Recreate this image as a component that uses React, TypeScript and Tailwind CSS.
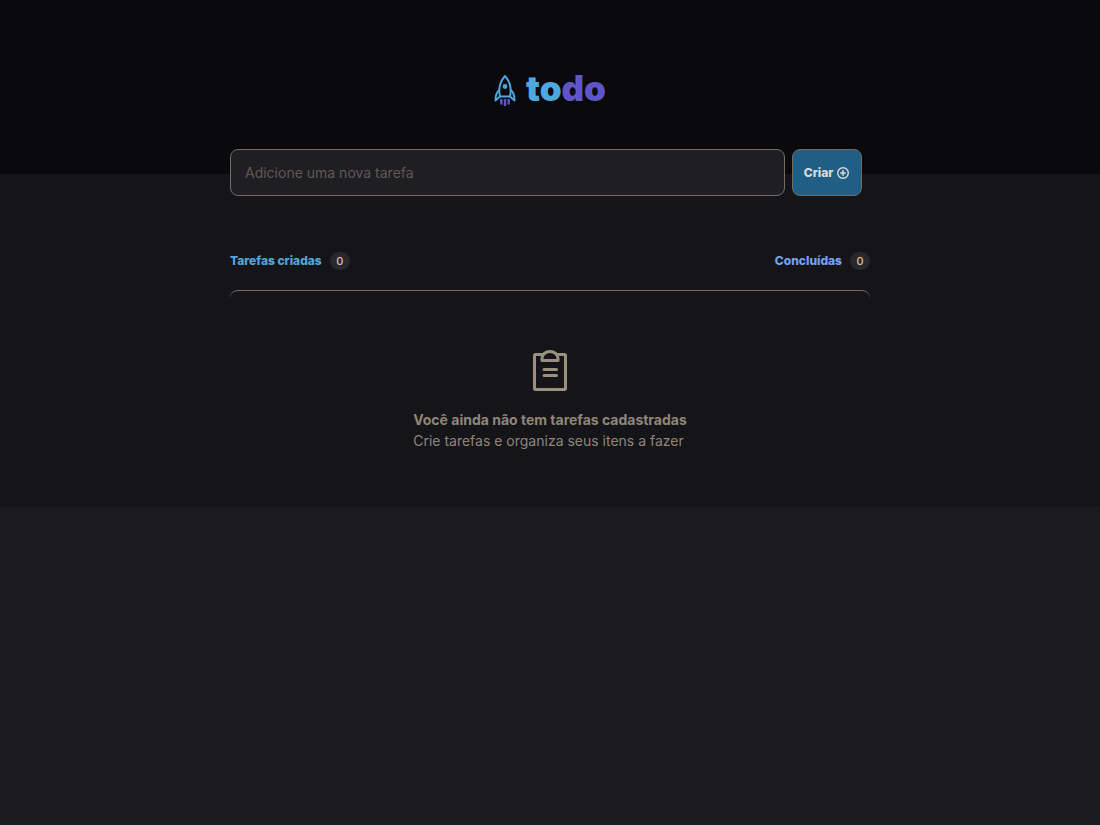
import React, { useState } from 'react';

interface CounterProps {
  label: string;
  value: number;
  color: string;
}

function RocketIcon() {
  return (
    <svg className="mt-1" width="22" height="33" viewBox="0 0 22 33" fill="none" aria-hidden="true">
      <g stroke="#4ea8de" strokeWidth="1.9" strokeLinejoin="round" strokeLinecap="round">
        <path d="M6 22.500C4.300 15 6 7.500 11 2C16 7.500 17.700 15 16 22.500Z" />
        <path d="M5.300 16C2.500 18 1.500 20.500 1.500 26.500L6 22.500M16.700 16C19.500 18 20.500 20.500 20.500 26.500L16 22.500" />
      </g>
      <circle cx="11" cy="12.500" r="2.400" fill="#4ea8de" />
      <path d="M7.300 25V30.500M11 25V32M14.700 25V30.500" stroke="#5e56c8" strokeWidth="2.400" />
    </svg>
  );
}

function PlusIcon() {
  return (
    <svg width="14" height="14" viewBox="0 0 14 14" fill="none" stroke="currentColor" strokeWidth="1.400" aria-hidden="true">
      <circle cx="7" cy="7" r="5.300" />
      <path d="M7 4.800V9.200M4.800 7H9.200" strokeWidth="1.600" strokeLinecap="round" />
    </svg>
  );
}

function ClipboardIcon() {
  return (
    <svg width="36" height="42" viewBox="0 0 36 42" fill="none" stroke="#999080" strokeWidth="3" strokeLinecap="round" strokeLinejoin="round" aria-hidden="true">
      <path d="M10 4.500H3.500Q2.500 4.500 2.500 5.500V38.500Q2.500 39.500 3.500 39.500H32.500Q33.500 39.500 33.500 38.500V5.500Q33.500 4.500 32.500 4.500H26" />
      <path d="M10 10.500V8.500C10 4.500 13.500 1.500 18 1.500C22.500 1.500 26 4.500 26 8.500V10.500Z" />
      <path d="M12 19.500H24.500M12 25.500H24.500" />
    </svg>
  );
}

function Counter({ label, value, color }: CounterProps) {
  return (
    <div className="flex items-center gap-2">
      <strong className={`text-xs leading-4 font-extrabold ${color}`}>{label}</strong>
      <span className="min-w-5 rounded-full bg-[#29292c] px-1.5 text-center text-[11px] leading-[18px] font-medium text-[#c9c5bd]">
        {value}
      </span>
    </div>
  );
}

export default function App() {
  const [task, setTask] = useState('');
  const [tasks, setTasks] = useState<string[]>([]);

  const handleSubmit = (e: React.FormEvent) => {
    e.preventDefault();
    if (!task.trim()) return;
    setTasks([...tasks, task]);
    setTask('');
  };

  return (
    <div className="min-h-screen bg-[#1b1a1e] font-['Inter',sans-serif]">
      <header className="flex h-[174px] items-center justify-center bg-[#0a090c] pt-0.5">
        <h1 className="flex items-center gap-2.5 text-[35px] leading-10 font-black">
          <RocketIcon />
          <span className="text-[#4ea8de]">
            to<span className="text-[#5e56c8]">do</span>
          </span>
        </h1>
      </header>

      <main className="bg-[#151419] px-4 pb-14">
        <div className="mx-auto max-w-[640px]">
          <form onSubmit={handleSubmit} className="relative -top-[25px] mr-2 flex gap-[7px]">
            <input
              type="text"
              aria-label="Nova tarefa"
              placeholder="Adicione uma nova tarefa"
              value={task}
              onChange={(e) => setTask(e.target.value)}
              className="h-[47px] min-w-0 flex-1 rounded-lg border border-[#756b60] bg-[#1f1e23] px-3.5 text-sm text-[#c9c5bd] outline-none placeholder:text-[#5f5955]"
            />
            <button
              type="submit"
              className="flex w-[70px] items-center justify-center gap-[3px] rounded-lg border border-[#756b60] bg-[#1f5f86] text-xs font-extrabold text-[#dcdad6]"
            >
              Criar
              <PlusIcon />
            </button>
          </form>

          <div className="mt-[31px] flex justify-between">
            <Counter label="Tarefas criadas" value={tasks.length} color="text-[#52a6dc]" />
            <Counter label="Concluídas" value={0} color="text-[#73a3f2]" />
          </div>

          <section className="mt-5 rounded-lg border-t border-[#756b60] pt-[59px] text-sm leading-[21px] text-[#8f8678]">
            {tasks.length === 0 ? (
              <div className="flex flex-col items-center gap-[17px]">
                <ClipboardIcon />
                <p>
                  <strong className="block font-bold">Você ainda não tem tarefas cadastradas</strong>
                  Crie tarefas e organiza seus itens a fazer
                </p>
              </div>
            ) : (
              <ul>
                {tasks.map((t, i) => (
                  <li key={i}>{t}</li>
                ))}
              </ul>
            )}
          </section>
        </div>
      </main>
    </div>
  );
}
